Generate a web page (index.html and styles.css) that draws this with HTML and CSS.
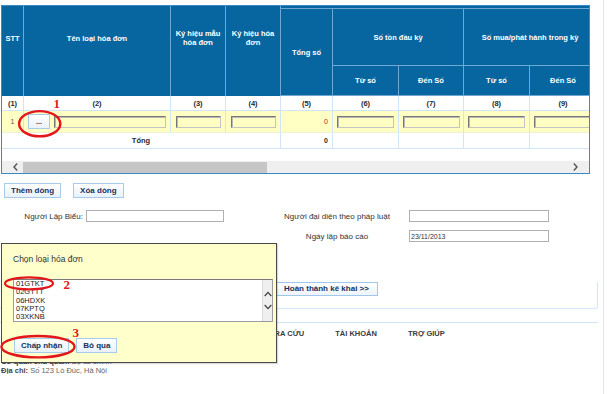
FILE: index.html
```html
<!DOCTYPE html>
<html lang="vi">
<head>
    <meta charset="UTF-8">
    <meta name="viewport" content="width=device-width, initial-scale=1.0">
    <title>Báo cáo tình hình sử dụng hóa đơn</title>
    <link rel="stylesheet" href="styles.css">
</head>
<body>
    <div class="page">
        <!-- Invoice grid (last column is cut by the scroll area) -->
        <div class="grid-box">
            <div class="grid-scroll">
                <table class="grid">
                    <colgroup>
                        <col class="c-stt"><col class="c-name"><col class="c-code"><col class="c-code">
                        <col class="c-total"><col class="c-num"><col class="c-num2"><col class="c-num"><col class="c-cut">
                    </colgroup>
                    <thead>
                        <tr class="h-top">
                            <th rowspan="3" class="h-lead">STT</th>
                            <th rowspan="3" class="h-lead">Tên loại hóa đơn</th>
                            <th rowspan="3" class="h-lead">Ký hiệu mẫu<br>hóa đơn</th>
                            <th rowspan="3" class="h-lead">Ký hiệu hóa<br>đơn</th>
                            <th colspan="5" class="h-gap"></th>
                        </tr>
                        <tr class="h-mid">
                            <th rowspan="2">Tổng số</th>
                            <th colspan="2">Số tồn đầu kỳ</th>
                            <th colspan="2" class="cut">Số mua/phát hành trong kỳ</th>
                        </tr>
                        <tr class="h-sub">
                            <th>Từ số</th><th>Đến Số</th><th>Từ số</th><th class="cut">Đến Số</th>
                        </tr>
                    </thead>
                    <tbody>
                        <tr class="r-index">
                            <td>(1)</td><td>(2)</td><td>(3)</td><td>(4)</td><td>(5)</td>
                            <td>(6)</td><td>(7)</td><td>(8)</td><td class="cut">(9)</td>
                        </tr>
                        <tr class="r-data">
                            <td class="stt">1</td>
                            <td>
                                <div class="name-cell">
                                    <button class="btn-pick">...</button>
                                    <input class="cell-input name-input" type="text">
                                </div>
                            </td>
                            <td><input class="cell-input" type="text"></td>
                            <td><input class="cell-input" type="text"></td>
                            <td class="num num-red">0</td>
                            <td><input class="cell-input num-input" type="text"></td>
                            <td><input class="cell-input num-input" type="text"></td>
                            <td><input class="cell-input num-input" type="text"></td>
                            <td><input class="cell-input cut-input" type="text"></td>
                        </tr>
                        <tr class="r-total">
                            <td colspan="4">Tổng</td>
                            <td class="num">0</td>
                            <td></td><td></td><td></td><td class="last"></td>
                        </tr>
                    </tbody>
                </table>
            </div>
            <div class="hscroll">
                <span class="hs-btn">
                    <svg width="5" height="8" viewBox="0 0 5 8"><path d="M4.2 0.6 L1 4 L4.2 7.4" fill="none" stroke="#555" stroke-width="1.4"/></svg>
                </span>
                <span class="hs-thumb"></span>
                <span class="hs-btn hs-right">
                    <svg width="5" height="8" viewBox="0 0 5 8"><path d="M0.8 0.6 L4 4 L0.8 7.4" fill="none" stroke="#555" stroke-width="1.4"/></svg>
                </span>
            </div>
        </div>

        <div class="row-actions">
            <button class="btn">Thêm dòng</button>
            <button class="btn">Xóa dòng</button>
        </div>

        <div class="sign-form">
            <label class="lbl-left">Người Lập Biểu:</label>
            <input class="form-input" type="text">
            <span></span>
            <label class="lbl-right">Người đại diện theo pháp luật</label>
            <span></span>
            <input class="form-input" type="text">

            <span></span><span></span><span></span>
            <label class="lbl-right">Ngày lập báo cáo</label>
            <span></span>
            <input class="form-input" type="text" value="23/11/2013">
        </div>

        <div class="finish-row">
            <button class="btn btn-finish">Hoàn thành kê khai &gt;&gt;</button>
        </div>

        <div class="menu-bar">
            <a class="menu-item">TRA CỨU</a>
            <a class="menu-item">TÀI KHOẢN</a>
            <a class="menu-item">TRỢ GIÚP</a>
        </div>

        <div class="footer">
            <p><b>Cơ quan chủ quản:</b> Bộ tài chính</p>
            <p><b>Địa chỉ:</b> Số 123 Lò Đúc, Hà Nội</p>
        </div>

        <!-- Popup: pick invoice type -->
        <div class="dialog">
            <p class="dialog-title">Chọn loại hóa đơn</p>
            <div class="listbox">
                <ul class="list-items">
                    <li>01GTKT</li>
                    <li>02GTTT</li>
                    <li>06HDXK</li>
                    <li>07KPTQ</li>
                    <li>03XKNB</li>
                </ul>
                <div class="list-scroll">
                    <svg width="8" height="6" viewBox="0 0 8 6"><path d="M0.7 5 L4 1.4 L7.3 5" fill="none" stroke="#444" stroke-width="1.3"/></svg>
                    <svg width="8" height="6" viewBox="0 0 8 6"><path d="M0.7 1 L4 4.6 L7.3 1" fill="none" stroke="#444" stroke-width="1.3"/></svg>
                </div>
            </div>
            <div class="dialog-actions">
                <button class="btn">Chấp nhận</button>
                <button class="btn">Bỏ qua</button>
            </div>
        </div>

        <!-- Red step marks drawn over the screen -->
        <svg class="marks" width="607" height="394" viewBox="0 0 607 394">
            <ellipse cx="39.7" cy="123.7" rx="20.6" ry="12.6" fill="none" stroke="#e3161b" stroke-width="2.4"/>
            <text x="53.5" y="108" class="mark-num">1</text>
            <ellipse cx="29" cy="283.4" rx="24" ry="6" fill="none" stroke="#e3161b" stroke-width="2.2"/>
            <text x="63.5" y="289" class="mark-num">2</text>
            <ellipse cx="38" cy="346.7" rx="36.6" ry="10.7" fill="none" stroke="#e3161b" stroke-width="2.4"/>
            <text x="72.5" y="337" class="mark-num">3</text>
        </svg>
    </div>
</body>
</html>
```

FILE: styles.css
```css
* {
    box-sizing: border-box;
    margin: 0;
    padding: 0;
}

body {
    font-family: "Liberation Sans", Arial, sans-serif;
    font-size: 8px;
    color: #2a2a2a;
    background-color: #fff;
}

.page {
    position: relative;
    width: 604px;
    height: 394px;
    padding-top: 5px;
    border-right: 1px solid #e6e6e6;
    overflow: hidden;
}

/* ---------- grid ---------- */
.grid-box {
    margin-left: 1px;
    width: 589px;
    border: 1px solid #3a8ac4;
    overflow: hidden;
}

.grid-scroll {
    width: 587px;
    overflow: hidden;
    padding-bottom: 12px;
}

.grid {
    border-collapse: separate;
    border-spacing: 0;
    table-layout: fixed;
    width: 587px;
}

.c-stt { width: 22px; }
.c-name { width: 147px; }
.c-code { width: 55px; }
.c-total { width: 52px; }
.c-num { width: 66px; }
.c-num2 { width: 65px; }
.c-cut { width: 59px; }

.grid th {
    background-color: #07669f;
    color: #fff;
    font-size: 7.5px;
    font-weight: bold;
    border-right: 1px solid #6ea9d6;
    border-bottom: 1px solid #6ea9d6;
    text-align: center;
    vertical-align: middle;
    line-height: 9px;
    padding: 0;
}

.grid th.h-lead {
    padding-bottom: 26px;
    border-bottom: none;
}

.h-top th.h-gap {
    height: 3px;
    border-right: none;
}

.h-mid th {
    height: 57px;
}

.h-sub th {
    height: 30px;
}

/* the column that runs under the right edge of the scroll area */
.grid th.cut,
.grid td.cut {
    padding-left: 7px;
    border-right: none;
}

.grid td {
    border-right: 1px solid #d2e5f6;
    border-bottom: 1px solid #d2e5f6;
    text-align: center;
    vertical-align: middle;
    padding: 0;
}

.grid td:last-child {
    border-right: none;
}

.r-index td {
    height: 15px;
    font-weight: bold;
    font-size: 7.5px;
}

.r-data td {
    height: 22px;
    background-color: #ffffc4;
    border-bottom-color: #eef0d8;
}

.r-total td {
    height: 16px;
    font-weight: bold;
    font-size: 7.5px;
}

.grid td.num {
    text-align: right;
    padding-right: 4px;
    font-size: 7px;
}

.grid td.num-red {
    color: #b0181a;
}

.grid td.stt {
    color: #555;
    font-size: 7px;
}

.name-cell {
    display: flex;
    align-items: center;
    gap: 4px;
    padding: 0 4px;
}

.btn-pick {
    width: 22px;
    height: 15px;
    border: 1px solid #a9cbe9;
    background: linear-gradient(#ffffff, #e9f2fb);
    font-family: inherit;
    font-size: 7px;
    font-weight: bold;
    color: #1b3158;
    line-height: 8px;
}

.cell-input {
    display: block;
    width: 45px;
    height: 12px;
    margin: 0 auto;
    background-color: #ffffc4;
    border: 1px solid #c4c4c4;
    border-top-color: #777;
    border-left-color: #777;
    box-shadow: inset 1px 1px 0 #b8b8b8;
}

.name-input {
    width: 112px;
    margin: 0;
}

.num-input {
    width: 57px;
}

.cut-input {
    width: 55px;
    margin: 0 0 0 4px;
    border-right: none;
}

/* ---------- horizontal scrollbar ---------- */
.hscroll {
    display: flex;
    align-items: center;
    height: 12px;
    background-color: #efefef;
}

.hs-btn {
    display: flex;
    align-items: center;
    justify-content: center;
    width: 21px;
    height: 12px;
    padding-left: 6px;
}

.hs-thumb {
    width: 244px;
    height: 11px;
    background-color: #c6c6c6;
}

.hs-right {
    margin-left: auto;
    padding-left: 0;
    padding-right: 6px;
}

/* ---------- buttons ---------- */
.btn {
    height: 15px;
    padding: 0 6px;
    border: 1px solid #a6cbeb;
    background: linear-gradient(#ffffff, #e8f1fa);
    font-family: inherit;
    font-size: 8px;
    font-weight: bold;
    color: #16305c;
    line-height: 12px;
}

.row-actions {
    display: flex;
    gap: 12px;
    margin-top: 9px;
    padding-left: 4px;
}

/* ---------- signature form ---------- */
.sign-form {
    display: grid;
    grid-template-columns: 86px 138px 56px 114px 15px 140px;
    grid-auto-rows: 12px;
    row-gap: 8px;
    align-items: center;
    margin-top: 12px;
}

.lbl-left {
    text-align: right;
    padding-right: 3px;
    color: #333;
}

.lbl-right {
    text-align: center;
    color: #333;
}

.form-input {
    height: 12px;
    width: 100%;
    border: 1px solid #b0b0b0;
    background-color: #fff;
    font-family: inherit;
    font-size: 7px;
    color: #333;
    padding-left: 1px;
}

/* ---------- bottom of page ---------- */
.finish-row {
    margin-top: 40px;
    padding-left: 275px;
    padding-bottom: 12px;
    width: 598px;
    border-bottom: 1px solid #d5e6f5;
    border-right: 1px solid #d5e6f5;
    border-bottom-right-radius: 3px;
}

.btn-finish {
    height: 14px;
    padding: 0 8px;
    border-color: #9fc8ec;
    background: linear-gradient(#ffffff, #eef5fc);
}

.menu-bar {
    display: flex;
    gap: 31px;
    width: 598px;
    margin-top: 13px;
    padding: 7px 0 0 270px;
    height: 17px;
    border-top: 1px solid #d3e5f5;
}

.menu-item {
    font-size: 7.5px;
    font-weight: bold;
    color: #3a3a3a;
    line-height: 8px;
}

.footer {
    margin-top: 18px;
    font-size: 7.5px;
    line-height: 9px;
    color: #666;
    padding-left: 1px;
}

.footer b {
    color: #444;
}

/* ---------- popup ---------- */
.dialog {
    position: absolute;
    left: 1px;
    top: 243px;
    width: 276px;
    height: 120px;
    padding: 0 3px 0 11px;
    background-color: #ffffcc;
    border: 1px solid #4a4a4a;
    box-shadow: 1px 1px 1px rgba(0, 0, 0, 0.15);
    z-index: 2;
}

.dialog-title {
    margin-top: 10px;
    font-size: 8.5px;
    line-height: 10px;
    color: #333;
}

.listbox {
    display: flex;
    height: 43px;
    margin-top: 15px;
    background-color: #fff;
    border: 1px solid #9c9c9c;
    border-top-color: #7a7a7a;
}

.list-items {
    flex: 1;
    list-style: none;
    padding-left: 2px;
    font-size: 7.5px;
    line-height: 8.3px;
    color: #222;
}

.list-scroll {
    display: flex;
    flex-direction: column;
    align-items: center;
    justify-content: center;
    gap: 7px;
    width: 10px;
    background-color: #efefef;
    border-left: 1px solid #dadada;
}

.dialog-actions {
    display: flex;
    gap: 7px;
    margin-top: 16px;
    padding-left: 1px;
}

/* ---------- annotations ---------- */
.marks {
    position: absolute;
    left: 0;
    top: 0;
    z-index: 3;
    pointer-events: none;
}

.mark-num {
    font-family: "Liberation Serif", "Times New Roman", serif;
    font-size: 13px;
    font-weight: bold;
    fill: #e3161b;
}
```
